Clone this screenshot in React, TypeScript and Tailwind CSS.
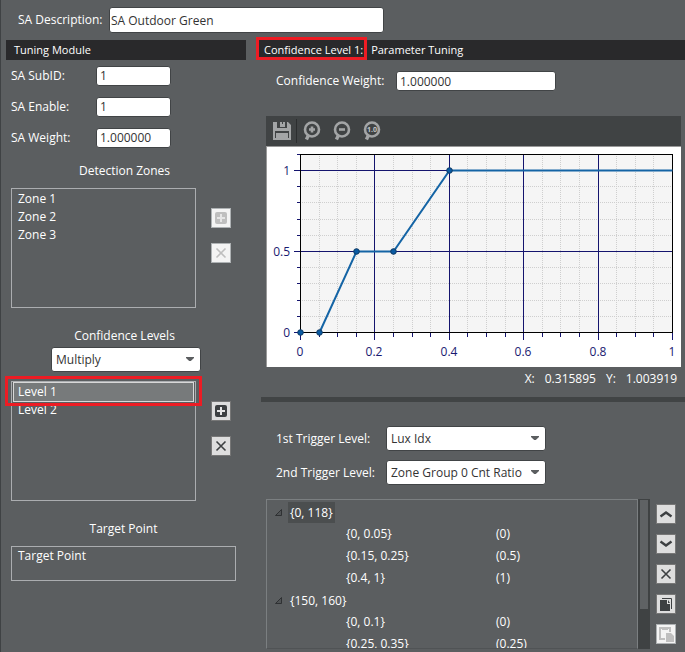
import type { ReactNode } from "react";

const fieldClass =
  "h-5 rounded-[3px] border border-[#414446] bg-white px-[3px] text-xs text-[#333] outline-none";

function Field({ label, id, value }: { label: string; id: string; value: string }) {
  return (
    <div className="flex h-[31px] items-center">
      <label htmlFor={id} className="w-[85px]">
        {label}
      </label>
      <input id={id} defaultValue={value} className={`${fieldClass} w-[75px]`} />
    </div>
  );
}

function Select({ id, label, options, className }: { id: string; label?: string; options: string[]; className: string }) {
  return (
    <div className={`grid items-center ${className}`}>
      <select
        id={id}
        aria-label={label}
        className="col-start-1 row-start-1 h-[25px] w-full appearance-none rounded-[3px] border border-[#414446] bg-white pl-1 text-xs text-[#333] outline-none"
      >
        {options.map((o) => (
          <option key={o}>{o}</option>
        ))}
      </select>
      <svg viewBox="0 0 10 5" className="pointer-events-none col-start-1 row-start-1 mr-[6px] h-[5px] w-[10px] justify-self-end">
        <path d="M1 0H9V1L5.8 4H4.2L1 1Z" fill="#5b5e60" />
      </svg>
    </div>
  );
}

function IconButton({ label, disabled, children }: { label: string; disabled?: boolean; children: ReactNode }) {
  return (
    <button
      aria-label={label}
      disabled={disabled}
      className="size-5 border border-[#777] bg-[#dedede] text-[#3d4042] disabled:border-[#aeb2b4] disabled:bg-[#f4f4f4] disabled:text-[#bfbfbf]"
    >
      <svg viewBox="0 0 18 18" className="size-[18px]">
        {children}
      </svg>
    </button>
  );
}

const plusIcon = (
  <>
    <rect x="3" y="3" width="12" height="12" rx="2" fill="currentColor" />
    <path d="M9 5V13M5 9H13" stroke="#e6e6e6" strokeWidth="2" />
  </>
);
const crossIcon = <path d="M4.5 4.5L13.5 13.5M13.5 4.5L4.5 13.5" fill="none" stroke="currentColor" strokeWidth="1.6" />;

function Magnifier({ label, children }: { label: string; children: ReactNode }) {
  return (
    <button aria-label={label} className="h-5 w-[30px]">
      <svg viewBox="0 0 20 20" className="mx-auto size-5">
        <path d="M6.6 14L4.4 18.5" stroke="#a3a5a6" strokeWidth="3.4" />
        <circle cx="10" cy="8.5" r="7" fill="none" stroke="#a3a5a6" strokeWidth="2.6" />
        {children}
      </svg>
    </button>
  );
}

const px = (v: number) => 33 + Math.round(372 * v);
const py = (v: number) => 185 - Math.round(162 * v);
const points: [number, number][] = [
  [0, 0],
  [0.05, 0],
  [0.15, 0.5],
  [0.25, 0.5],
  [0.4, 1],
];

function Chart() {
  const xs = Array.from({ length: 21 }, (_, i) => i);
  const ys = Array.from({ length: 11 }, (_, i) => i);
  return (
    <svg viewBox="0 0 414 220" className="block h-auto w-full" role="img" aria-label="Confidence curve">
      <rect width="414" height="220" fill="#fff" />
      <rect x="33" y="7" width="373" height="179" fill="#f5f5f5" />
      <g shapeRendering="crispEdges" stroke="#cfcfcf" strokeDasharray="1 1">
        {xs.filter((i) => i % 4).map((i) => (
          <path key={i} d={`M${px(i / 20) + 0.5} 7V185`} />
        ))}
        {ys.filter((i) => i % 5).map((i) => (
          <path key={i} d={`M33 ${py(i / 10) + 0.5}H405`} />
        ))}
      </g>
      <g shapeRendering="crispEdges" stroke="#14146e">
        {xs.map((i) => (
          <path key={i} d={`M${px(i / 20) + 0.5} ${i % 4 || i === 0 || i === 20 ? 186 : 7}V${i % 4 ? 190 : 193}`} />
        ))}
        {ys.map((i) => (
          <path key={i} d={`M${i % 5 ? 30 : 27} ${py(i / 10) + 0.5}H${i % 5 || i === 0 ? 33 : 405}`} />
        ))}
        <path d="M30 7.5H33" />
      </g>
      <rect x="33.5" y="7.5" width="372" height="178" fill="none" stroke="#000" shapeRendering="crispEdges" />
      <polyline
        points={[...points.slice(1), [1, 1]].map(([x, y]) => `${px(x) + 0.5},${py(y) + 0.5}`).join(" ")}
        fill="none"
        stroke="#1464a5"
        strokeWidth="2"
      />
      {points.map(([x, y]) => (
        <circle key={x} cx={px(x) + 0.5} cy={py(y) + 0.5} r="2.8" fill="#0b5ba3" stroke="#103a63" />
      ))}
      <g fill="#191970" fontSize="12">
        <g textAnchor="middle">
          {[0, 0.2, 0.4, 0.6, 0.8, 1].map((v) => (
            <text key={v} x={px(v)} y="209">
              {v}
            </text>
          ))}
        </g>
        <g textAnchor="end">
          {[0, 0.5, 1].map((v) => (
            <text key={v} x="23" y={py(v) + 5}>
              {v}
            </text>
          ))}
        </g>
      </g>
    </svg>
  );
}

const tree = [
  { name: "{0, 118}", rows: [["{0, 0.05}", "(0)"], ["{0.15, 0.25}", "(0.5)"], ["{0.4, 1}", "(1)"]] },
  { name: "{150, 160}", rows: [["{0, 0.1}", "(0)"], ["{0.25, 0.35}", "(0.25)"]] },
];

function Tree() {
  return (
    <ul className="h-[150px] min-w-0 flex-1 overflow-hidden border border-[#7b7f81] border-b-[#505355] pt-px">
      {tree.map((node, i) => (
        <li key={node.name}>
          <div className="flex h-[22px] items-center pl-2">
            <svg viewBox="0 0 7 7" className="mr-[6px] size-[7px]">
              <path d="M0.5 6.5H6.5V0.5Z" fill="#505355" stroke="#2f3133" />
            </svg>
            <span className={i === 0 ? "bg-[#4b4e4f] px-[2px] leading-[21px]" : "px-[2px] leading-[21px]"}>{node.name}</span>
          </div>
          <ul>
            {node.rows.map(([range, value]) => (
              <li key={range} className="flex h-[22px] items-center pl-[79px]">
                <span className="w-[150px]">{range}</span>
                <span>{value}</span>
              </li>
            ))}
          </ul>
        </li>
      ))}
    </ul>
  );
}

function ListBox({ items, selected, label }: { items: string[]; selected?: number; label: string }) {
  return (
    <ul role="listbox" aria-label={label} className="h-[120px] w-[185px] border border-[#abadb0] px-[2px] py-px">
      {items.map((item, i) => (
        <li
          key={item}
          role="option"
          aria-selected={i === selected}
          className={`h-[18px] px-1 leading-[18px] ${i === selected ? "bg-[#777a7b] outline outline-[#d8d8d8]" : ""}`}
        >
          {item}
        </li>
      ))}
    </ul>
  );
}

export default function App() {
  return (
    <div className="min-h-screen border-l border-[#3f4244] bg-[#5b5e60] font-['Open_Sans','Noto_Sans',sans-serif] text-xs text-white">
      <div className="flex h-10 items-center pl-[17px]">
        <label htmlFor="description" className="w-[91px]">
          SA Description:
        </label>
        <input id="description" defaultValue="SA Outdoor Green" className="h-[26px] w-[275px] rounded-[3px] border border-[#414446] bg-white px-px text-xs text-[#333] outline-none" />
      </div>
      <div className="flex gap-[10px] pl-[5px]">
        <section className="w-60 shrink-0">
          <h2 className="h-5 bg-[#29292b] px-2 text-[11px] leading-5">Tuning Module</h2>
          <div className="pl-[5px]">
            <Field label="SA SubID:" id="subid" value="1" />
            <Field label="SA Enable:" id="enable" value="1" />
            <Field label="SA Weight:" id="weight" value="1.000000" />
            <h3 className="h-[35px] pr-2 text-center leading-[35px]">Detection Zones</h3>
            <div className="flex gap-[15px]">
              <ListBox label="Detection Zones" items={["Zone 1", "Zone 2", "Zone 3"]} />
              <div className="flex flex-col gap-[15px] pt-5">
                <IconButton label="Add zone" disabled>{plusIcon}</IconButton>
                <IconButton label="Remove zone" disabled>{crossIcon}</IconButton>
              </div>
            </div>
            <h3 className="mt-4 h-[23px] pr-2 text-center leading-[23px]">Confidence Levels</h3>
            <Select id="combine" label="Combine" options={["Multiply"]} className="ml-10 w-[150px]" />
            <div className="mt-[9px] flex gap-[15px]">
              <div className="relative">
                <ListBox label="Confidence Levels" items={["Level 1", "Level 2"]} selected={0} />
                <div className="pointer-events-none absolute -inset-x-[6px] -top-[5px] h-[30px] border-3 border-[#ed1c24]" />
              </div>
              <div className="flex flex-col gap-[15px] pt-5">
                <IconButton label="Add level">{plusIcon}</IconButton>
                <IconButton label="Remove level">{crossIcon}</IconButton>
              </div>
            </div>
            <h3 className="mt-4 h-[29px] pr-[10px] text-center leading-[23px]">Target Point</h3>
            <div className="mr-[10px] h-[35px] border border-[#abadb0] px-[6px] leading-[18px]">Target Point</div>
          </div>
        </section>

        <section className="min-w-0 flex-1">
          <h2 className="flex h-5 gap-1 bg-[#29292b] text-[11px] leading-5 whitespace-nowrap">
            <span className="relative pr-1 pl-2">
              Confidence Level 1:
              <span className="absolute inset-x-0 -top-[3px] bottom-0 border-3 border-[#ed1c24]" />
            </span>
            Parameter Tuning
          </h2>
          <div className="flex h-[56px] items-center pb-[14px] pl-5">
            <label htmlFor="confidence" className="w-[120px]">
              Confidence Weight:
            </label>
            <input id="confidence" defaultValue="1.000000" className={`${fieldClass} w-40`} />
          </div>
          <div className="mr-1 ml-[10px]">
            <div className="flex h-[30px] items-center bg-[#404344]">
              <button aria-label="Save" className="mr-[5px] ml-[7px]">
                <svg viewBox="0 0 18 18" className="size-[18px]">
                  <path d="M0 0H4V6H14V0H15L18 3V18H0Z" fill="#a3a5a6" />
                  <path d="M7 0H9V2H10V0H12V5H7Z" fill="#a3a5a6" />
                  <path d="M2 9H16V16H2Z" fill="#404344" />
                  <path d="M3 11H15V16H3Z" fill="#a3a5a6" />
                </svg>
              </button>
              <div className="h-6 w-px bg-[#2c2e2f]" />
              <Magnifier label="Zoom in">
                <path d="M10 5.5V11.5M7 8.5H13" stroke="#a3a5a6" strokeWidth="2.6" />
              </Magnifier>
              <Magnifier label="Zoom out">
                <path d="M7 8.5H13" stroke="#a3a5a6" strokeWidth="2.6" />
              </Magnifier>
              <Magnifier label="Actual size">
                <text x="10" y="11" textAnchor="middle" fontSize="7" fontWeight="700" fill="#c3c5c6">
                  1.0
                </text>
              </Magnifier>
            </div>
            <div className="border-t border-l border-[#999]">
              <Chart />
            </div>
          </div>
          <div className="flex h-[30px] justify-end gap-[10px] pr-2 leading-6">
            <span>X:</span>
            <span>0.315895</span>
            <span>Y:</span>
            <span>1.003919</span>
          </div>
          <div className="ml-[5px] h-[5px] bg-[#414445]" />
          <div className="flex flex-col gap-[9px] pt-6 pb-[14px] pl-5">
            <div className="flex items-center">
              <label htmlFor="trigger1" className="w-[110px]">
                1st Trigger Level:
              </label>
              <Select id="trigger1" options={["Lux Idx"]} className="w-40" />
            </div>
            <div className="flex items-center">
              <label htmlFor="trigger2" className="w-[110px]">
                2nd Trigger Level:
              </label>
              <Select id="trigger2" options={["Zone Group 0 Cnt Ratio"]} className="w-40" />
            </div>
          </div>
          <div className="flex pr-[9px] pl-[10px]">
            <Tree />
            <div className="w-3 bg-[#3f4243] px-[2px] pt-px">
              <div className="h-[109px] bg-[#5f6264]" />
            </div>
            <div className="flex flex-col gap-[10px] pt-[5px] pl-[6px]">
              <IconButton label="Move up">
                <path d="M3.5 11.5L9 7.5L14.5 11.5" fill="none" stroke="currentColor" strokeWidth="2.4" />
              </IconButton>
              <IconButton label="Move down">
                <path d="M3.5 6.5L9 10.5L14.5 6.5" fill="none" stroke="currentColor" strokeWidth="2.4" />
              </IconButton>
              <IconButton label="Delete">{crossIcon}</IconButton>
              <IconButton label="Copy">
                <path d="M5 3.5H14.5V14" fill="none" stroke="currentColor" />
                <path d="M3 5H10V9H13V16H3Z" fill="currentColor" />
                <path d="M11 5L13 8H11Z" fill="currentColor" />
              </IconButton>
              <IconButton label="Paste" disabled>
                <path d="M8 14H3V3H13V7" fill="none" stroke="currentColor" strokeWidth="2" />
                <path d="M5 2H11V5H5Z" fill="currentColor" />
                <path d="M9 8H14L17 11V17H9Z" fill="currentColor" />
              </IconButton>
            </div>
          </div>
        </section>
      </div>
    </div>
  );
}
